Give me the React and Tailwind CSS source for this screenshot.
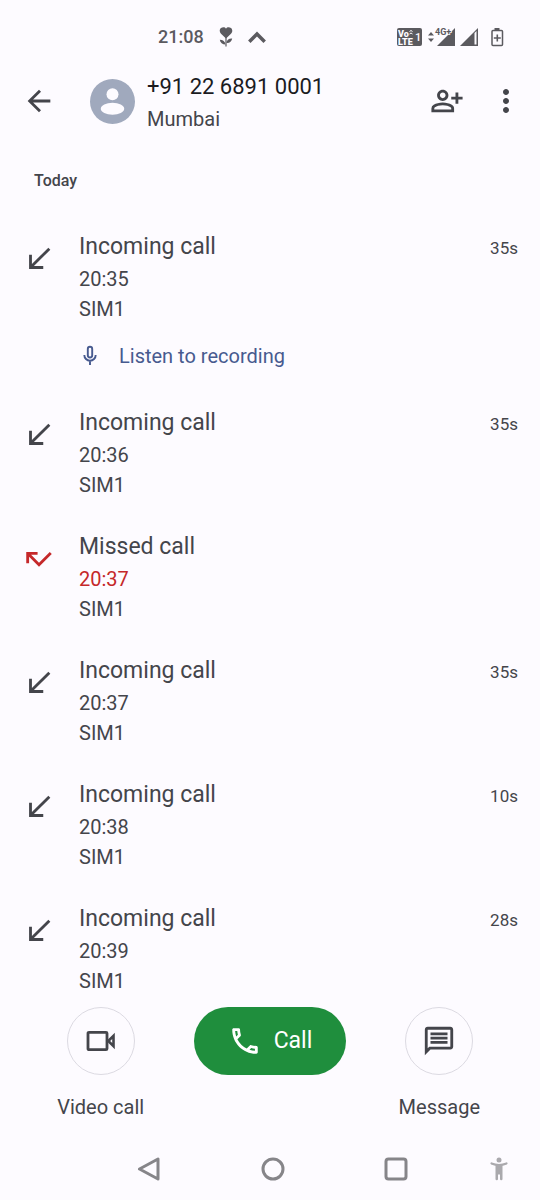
import React from "react";
import {
  MdArrowBack,
  MdCallMissed,
  MdCallReceived,
  MdMoreVert,
  MdOutlineCall,
  MdOutlineMessage,
  MdOutlinePersonAddAlt,
} from "react-icons/md";

const calls = [
  { id: 1, type: "incoming", time: "20:35", sim: "SIM1", duration: "35s", recording: true },
  { id: 2, type: "incoming", time: "20:36", sim: "SIM1", duration: "35s" },
  { id: 3, type: "missed", time: "20:37", sim: "SIM1" },
  { id: 4, type: "incoming", time: "20:37", sim: "SIM1", duration: "35s" },
  { id: 5, type: "incoming", time: "20:38", sim: "SIM1", duration: "10s" },
  { id: 6, type: "incoming", time: "20:39", sim: "SIM1", duration: "28s" },
];

const FlowerIcon = () => (
  <svg width="14" height="20" viewBox="0 0 14 20" fill="currentColor">
    <path d="M7 11.500 2 6.800C.2 5 .4 2.300 2 1.100 3.700-.1 6-.1 7 1.800 8-.1 10.300-.1 12 1.100c1.600 1.200 1.800 3.900 0 5.700z" />
    <path d="M6.400 10h1.200v9.500H6.400z" />
    <path d="M6.500 17.500C3.500 17.500 1.200 15.800.8 12.800c3.200 0 5.400 1.600 5.700 4.700zM7.500 16c0-2.700 2.200-4.600 5.700-4.400-.4 3-2.700 4.700-5.700 4.400z" />
  </svg>
);

const SignalIcons = () => (
  <svg width="109" height="22" viewBox="0 0 109 22" fill="currentColor">
    {/* VoLTE badge */}
    <rect x="0" y="2" width="25" height="18" rx="2" />
    <g fill="#fdfbff" fontFamily="Roboto, sans-serif" fontWeight="900">
      <text x="1" y="11" fontSize="9">
        Vo
      </text>
      <text x="1" y="19" fontSize="9">
        LTE
      </text>
      <text x="18" y="15" fontSize="11" fontWeight="500">
        1
      </text>
    </g>
    <path d="M12.500 5.500q1.500-2 3 0M12.500 8q1.500-2 3 0" fill="none" stroke="#fdfbff" />
    {/* data arrows */}
    <path d="M31 9.500 34 6l3 3.500zM31 12.500h6L34 16z" />
    <path d="M58 2v18H40z" />
    <text
      x="38"
      y="9"
      fontSize="9"
      fontFamily="Roboto, sans-serif"
      fontWeight="700"
      stroke="#fdfbff"
      strokeWidth="1.500"
      paintOrder="stroke"
    >
      4G+
    </text>
    {/* second sim */}
    <path d="M81 2v18H63z" />
    <path d="M77.500 7v11.500h2V5z" fill="#fdfbff" />
    {/* battery */}
    <path d="M97.500 2h5v3h-5z" />
    <rect x="95" y="4.500" width="10.500" height="15" rx="1" fill="none" stroke="currentColor" strokeWidth="1.500" />
    <path d="M99.500 8.500h1.600v2.700h2.700v1.600h-2.700v2.700h-1.600v-2.700h-2.700v-1.600h2.700z" />
  </svg>
);

const MicIcon = () => (
  <svg width="24" height="24" viewBox="0 0 24 24" fill="none" stroke="currentColor" strokeWidth="1.900">
    <rect x="8.800" y="2.800" width="4.400" height="10.700" rx="2.200" />
    <path d="M5.300 11a5.700 5.700 0 0 0 11.400 0M11 16.700V21" />
  </svg>
);

const VideoIcon = () => (
  <svg width="30" height="22" viewBox="0 0 30 22" fill="none" stroke="currentColor">
    <rect x="2" y="2.300" width="19" height="17.400" rx="1" strokeWidth="2.800" />
    <path d="M22.300 11 27.500 5.800v10.400z" strokeWidth="2.600" />
  </svg>
);

const StatusBar = () => (
  <div className="flex h-[69px] items-center justify-between pt-1 pr-[34px] pl-[158px] text-[#5b5a5f]">
    <div className="flex items-center gap-[15px]">
      <span className="text-lg font-medium">21:08</span>
      <FlowerIcon />
      <svg
        width="18"
        height="12"
        viewBox="0 0 18 12"
        fill="none"
        stroke="currentColor"
        strokeWidth="3.500"
      >
        <path d="M1.300 10.700 9 3l7.700 7.700" />
      </svg>
    </div>
    <SignalIcons />
  </div>
);

const Header = () => (
  <header className="flex h-16 items-center pr-4 pl-[22px] text-[#44454b]">
    <button aria-label="Back">
      <MdArrowBack size={34} />
    </button>
    <svg className="ml-[34px] shrink-0" width="45" height="45" viewBox="0 0 45 45">
      <circle cx="22.500" cy="22.500" r="22.500" fill="#a0a9bd" />
      <circle cx="22.500" cy="15.300" r="6" fill="#fdfbff" />
      <ellipse cx="22.500" cy="29.800" rx="11.700" ry="6" fill="#fdfbff" />
    </svg>
    <div className="ml-3 min-w-0 flex-1 pt-1">
      <h1 className="text-[22px] leading-8 text-[#1b1b1f]">+91 22 6891 0001</h1>
      <p className="text-xl leading-8">Mumbai</p>
    </div>
    <button aria-label="Add contact">
      <MdOutlinePersonAddAlt size={34} />
    </button>
    <button aria-label="More options" className="ml-6">
      <MdMoreVert size={36} />
    </button>
  </header>
);

const CallRow = ({ call }) => {
  const missed = call.type === "missed";
  return (
    <li className="flex items-start px-[22px] py-[15px]">
      <div className={`mt-3 ${missed ? "text-[#c5282a]" : ""}`}>
        {missed ? <MdCallMissed size={34} /> : <MdCallReceived size={34} />}
      </div>
      <div className="ml-[23px] flex-1">
        <h3 className="text-[23px] leading-[34px]">
          {missed ? "Missed call" : "Incoming call"}
        </h3>
        <p className={`text-xl leading-[30px] ${missed ? "text-[#c5282a]" : ""}`}>
          {call.time}
        </p>
        <p className="text-xl leading-[30px]">{call.sim}</p>
        {call.recording && (
          <button className="mt-3 flex h-10 items-center gap-4 text-xl text-[#475a8f]">
            <MicIcon />
            Listen to recording
          </button>
        )}
      </div>
      <span className="text-[17px] leading-9">{call.duration}</span>
    </li>
  );
};

const BottomBar = () => (
  <footer className="grid grid-cols-3 px-4 text-xl">
    <button className="flex flex-col items-center gap-4">
      <span className="flex size-[68px] items-center justify-center rounded-full border border-[#dcdae2]">
        <VideoIcon />
      </span>
      <span className="leading-8">Video call</span>
    </button>
    <button className="flex h-[68px] w-[152px] items-center justify-center gap-3 justify-self-center rounded-full bg-[#1f8e3d] text-[23px] text-white">
      <MdOutlineCall size={34} />
      Call
    </button>
    <button className="flex flex-col items-center gap-4">
      <span className="flex size-[68px] items-center justify-center rounded-full border border-[#dcdae2]">
        <MdOutlineMessage size={34} />
      </span>
      <span className="leading-8">Message</span>
    </button>
  </footer>
);

const SystemNav = () => (
  <nav className="mt-[15px] grid h-[62px] grid-cols-[87fr_124fr_123fr_124fr_82fr] items-center justify-items-center text-[#868589]">
    <button aria-label="Back" className="col-start-2">
      <svg width="24" height="24" viewBox="0 0 24 24" fill="none" stroke="currentColor" strokeWidth="3" strokeLinejoin="round">
        <path d="M21 2v20L2.500 12z" />
      </svg>
    </button>
    <button aria-label="Home">
      <svg width="24" height="24" viewBox="0 0 24 24" fill="none" stroke="currentColor" strokeWidth="3">
        <circle cx="12" cy="12" r="10" />
      </svg>
    </button>
    <button aria-label="Recent apps">
      <svg width="24" height="24" viewBox="0 0 24 24" fill="none" stroke="currentColor" strokeWidth="3">
        <rect x="2" y="2" width="20" height="20" rx="2.500" />
      </svg>
    </button>
    <button aria-label="Accessibility" className="text-[#aaa9ad]">
      <svg width="18" height="24" viewBox="0 0 18 24" fill="currentColor">
        <circle cx="9" cy="3" r="2.500" />
        <path
          d="M1.500 6.500Q9 9.500 16.500 6.500"
          fill="none"
          stroke="currentColor"
          strokeWidth="2.200"
          strokeLinecap="round"
        />
        <path d="M5.500 7.500h7V22a1 1 0 0 1-2.500 0v-4.500H8V22a1 1 0 0 1-2.500 0z" />
      </svg>
    </button>
  </nav>
);

const App = () => {
  return (
    <div className="flex h-screen flex-col bg-[#fdfbff] font-[Roboto,sans-serif] text-[#44454b]">
      <StatusBar />
      <Header />
      <main className="min-h-0 flex-1 overflow-hidden">
        <h2 className="pt-[38px] pb-6 pl-[34px] text-base leading-5 font-medium">Today</h2>
        <ul>
          {calls.map((call) => (
            <CallRow key={call.id} call={call} />
          ))}
        </ul>
      </main>
      <BottomBar />
      <SystemNav />
    </div>
  );
};

export default App;
